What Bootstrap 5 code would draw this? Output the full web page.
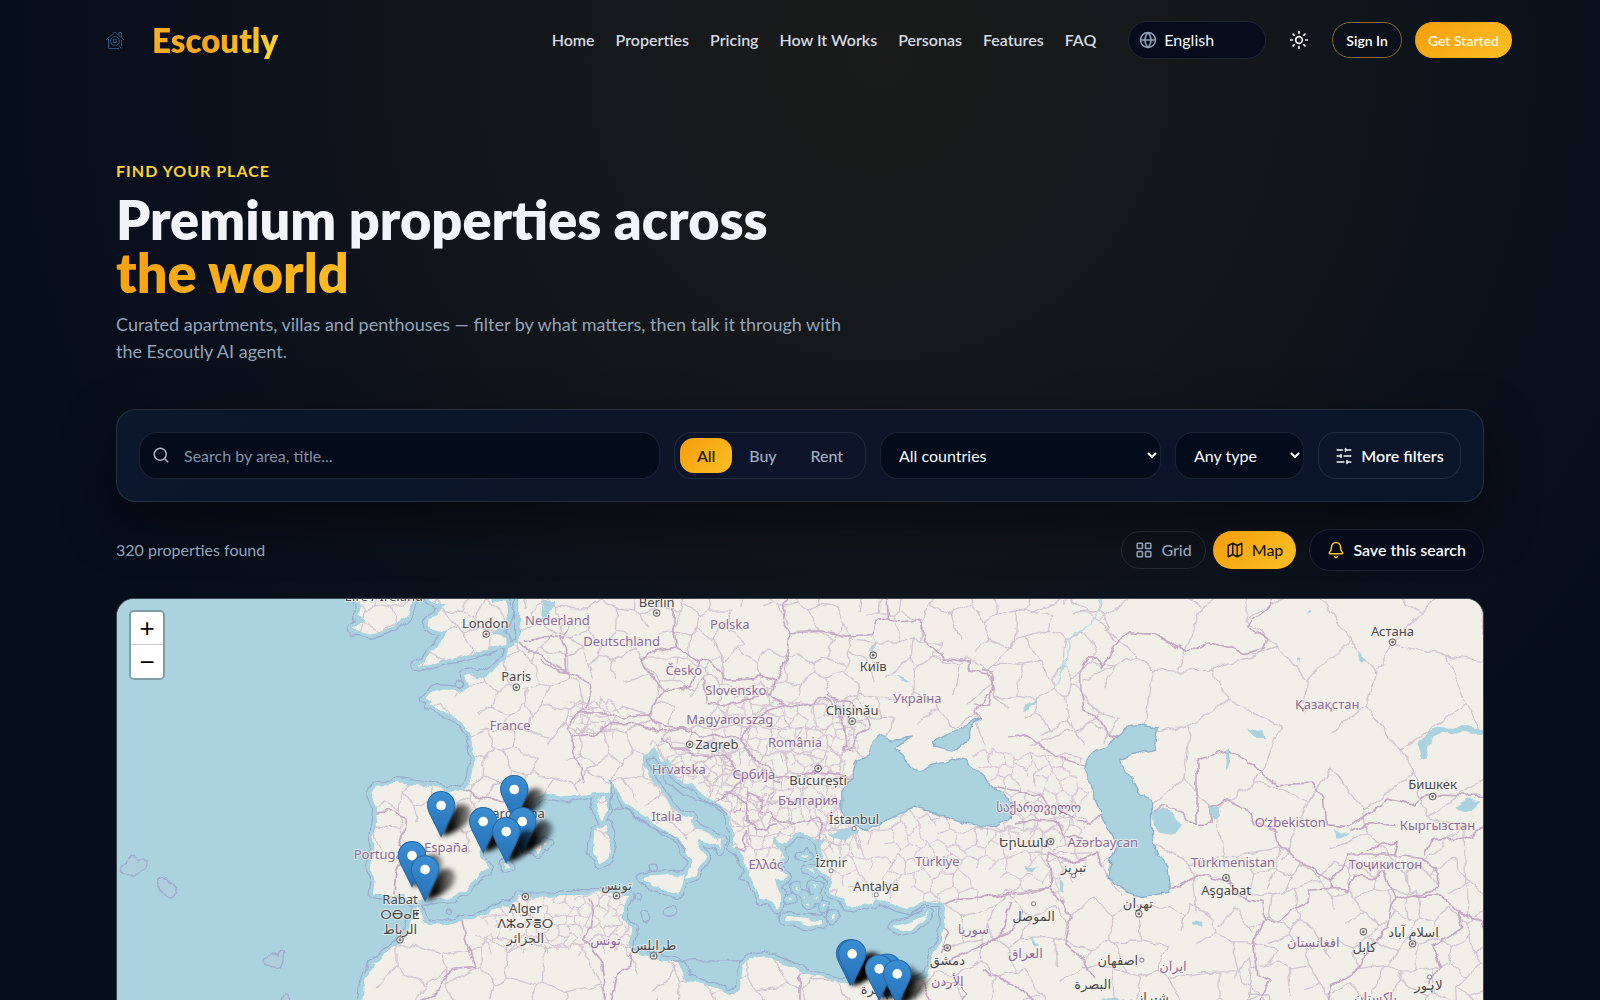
<!DOCTYPE html>
<html lang="en">
<head>
<meta charset="utf-8">
<meta name="viewport" content="width=device-width, initial-scale=1">
<title>Escoutly – Premium properties</title>
<link rel="stylesheet" href="https://cdn.jsdelivr.net/npm/bootstrap@5.3.0/dist/css/bootstrap.min.css">
<style>
:root{--gold:linear-gradient(135deg,#f59e0b,#fbbf24);--line:rgba(148,163,184,.16);--ink:#f1f5f9;--soft:#94a3b8;--field:#040b1b}
body{font-family:Lato,"Noto Sans",sans-serif;font-size:16px;color:var(--ink);background:radial-gradient(ellipse 58% 95% at 55% 6%,#1a1b1a 0%,#14181b 35%,#0b111b 72%,#060d1b 100%);color-scheme:dark}
button,select,input{font:inherit}
.shell-top{max-width:1424px;height:80px}
.shell{max-width:1368px}
.brand-name{font-size:33px;line-height:40px;font-weight:800;background:linear-gradient(135deg,#fbb324,#f5a31b 50%,#fde030);-webkit-background-clip:text;background-clip:text;color:transparent}
.brand-link{gap:13px}
.menu{gap:21px}
.menu a{color:#d5dae2;font-weight:600;text-decoration:none}
.lang{margin-left:32px}
.lang select{appearance:none;width:138px;height:38px;border-radius:19px;border:1px solid var(--line);background:#060c1b;color:#f8fafc;padding:0 12px 0 35px}
.lang svg{left:11px;top:10px}
.theme-btn{width:40px;height:36px;color:#f8fafc;margin:0 13px;border:0;line-height:20px}
.pill{height:36px;border-radius:18px;font-size:14px;font-weight:600;padding:0 13px}
.pill-line{background:#0b111a;border:1px solid #84692a;color:#fff;margin-right:13px}
.pill-gold{background:var(--gold);border:0;color:#fff7dc}
.hero{padding-top:79px}
.eyebrow{font-size:16px;line-height:24px;font-weight:700;letter-spacing:1px;color:#fbd12f}
.hero h1{font-size:54px;line-height:53px;font-weight:800;margin:10px 0 12px}
.gold-text{background:var(--gold);-webkit-background-clip:text;background-clip:text;color:transparent}
.intro{font-size:18px;line-height:27px;color:var(--soft);max-width:740px}
.filters{margin-top:44px;padding:22px;border-radius:20px;border:1px solid rgba(148,140,120,.22);background:linear-gradient(135deg,#0a172d,#0d1426 50%,#0a152a);box-shadow:0 20px 50px rgba(0,0,0,.5);gap:14px}
.ctl{height:47px;border-radius:18px;border:1px solid var(--line);background:var(--field);color:#f8fafc}
.search-box{flex:1 1 0;min-width:200px}
.search-box input{padding:0 16px 0 44px}
.search-box input::placeholder{color:#8791a1;opacity:1}
.search-box svg{left:13px;top:14px;color:#a8b2c0}
.deal{padding:5px;background:#0b1428;width:192px}
.deal button{border:0;background:none;border-radius:14px;color:#a3aec2;font-weight:500;flex:1 1 auto}
.deal button.on{background:var(--gold);color:#14130c}
select.ctl{padding:0 2px 0 14px}
.pick-country{width:281px}
.pick-type{width:129px}
.more{width:143px;background:#0b152a;font-weight:600}
.results{margin-top:27px;color:var(--soft);gap:7px}
.view{height:38px;border-radius:19px;border:1px solid var(--line);background:transparent;color:var(--soft);padding:0 13px;font-weight:500}
.view.on{background:var(--gold);border:0;color:#1a1608}
.save{height:42px;border-radius:21px;border:1px solid var(--line);background:#050b1a;color:#f8fafc;font-weight:600;padding:0 17px;margin-left:6px}
.map-frame{margin-top:27px;border-radius:18px 18px 0 0;border:1px solid #39454f;border-bottom:0;background:#aad3df;min-height:320px}
.zoomer{left:12px;top:11px;border:2px solid rgba(0,0,0,.25);border-radius:5px;background-clip:padding-box}
.zoomer button{width:32px;height:33px;border:0;background:#fff;color:#000;font:26px/30px "Liberation Sans",sans-serif;padding:0}
.zoomer button:first-child{border-bottom:1px solid #ccc}
.names text{font-family:"Noto Sans","DejaVu Sans",sans-serif;font-size:13px;text-anchor:middle;paint-order:stroke;stroke:#f8f4f0;stroke-opacity:.7;stroke-width:2px;fill:#4a4a4a}
.names .land-name text{fill:#8c6c98}
</style>
</head>
<body>
<div class="d-flex flex-column vh-100 overflow-hidden">
<header class="shell-top w-100 mx-auto d-flex align-items-center flex-shrink-0">
  <a href="#" class="brand-link d-flex align-items-center text-decoration-none me-auto">
    <svg width="51" height="36" viewBox="-18 -9 51 36" fill="none" stroke="#2f547d" stroke-width="1"><path d="M0 9 9 1l9 8M13 4.500V1.500h2.500v5M2.500 8v9.500H13M15.500 9v6"/><circle cx="9" cy="10" r="4.500"/><path d="M12 13.500l3.500 4M7.500 8.500h3v3h-3z"/></svg>
    <span class="brand-name">Escoutly</span>
  </a>
  <nav class="menu d-flex align-items-center"><a href="#">Home</a><a href="#">Properties</a><a href="#">Pricing</a><a href="#">How It Works</a><a href="#">Personas</a><a href="#">Features</a><a href="#">FAQ</a></nav>
  <div class="lang position-relative">
    <select aria-label="Language"><option>English</option></select>
    <svg class="position-absolute" width="18" height="18" viewBox="0 0 24 24" fill="none" stroke="#94a3b8" stroke-width="2"><circle cx="12" cy="12" r="10"/><path d="M12 2a14.500 14.500 0 0 0 0 20 14.500 14.500 0 0 0 0-20M2 12h20"/></svg>
  </div>
  <button class="theme-btn btn p-0 d-flex align-items-center justify-content-center" aria-label="Theme"><svg width="20" height="20" viewBox="0 0 24 24" fill="none" stroke="currentColor" stroke-width="2" stroke-linecap="round"><circle cx="12" cy="12" r="4"/><path d="M12 2v2M12 20v2M4.900 4.900l1.400 1.400M17.700 17.700l1.400 1.400M2 12h2M20 12h2M6.300 17.700l-1.400 1.400M19.100 4.900l-1.400 1.400"/></svg></button>
  <button class="pill pill-line">Sign In</button>
  <button class="pill pill-gold">Get Started</button>
</header>
<main class="shell w-100 mx-auto d-flex flex-column flex-grow-1">
  <section class="hero">
    <div class="eyebrow">FIND YOUR PLACE</div>
    <h1>Premium properties across<br><span class="gold-text">the world</span></h1>
    <p class="intro mb-0">Curated apartments, villas and penthouses — filter by what matters, then talk it through with the Escoutly AI agent.</p>
  </section>
  <form class="filters d-flex align-items-center" onsubmit="return false">
    <div class="search-box position-relative">
      <input class="ctl w-100" type="text" aria-label="Search" placeholder="Search by area, title...">
      <svg class="position-absolute" width="18" height="18" viewBox="0 0 24 24" fill="none" stroke="currentColor" stroke-width="2" stroke-linecap="round"><circle cx="11" cy="11" r="8"/><path d="m21 21-4.300-4.300"/></svg>
    </div>
    <div class="deal ctl d-flex"><button type="button" class="on">All</button><button type="button">Buy</button><button type="button">Rent</button></div>
    <select class="ctl pick-country" aria-label="Country"><option>All countries</option></select>
    <select class="ctl pick-type" aria-label="Type"><option>Any type</option></select>
    <button type="button" class="more ctl d-flex align-items-center justify-content-center gap-2 p-0 text-nowrap"><svg width="18" height="18" viewBox="0 0 24 24" fill="none" stroke="currentColor" stroke-width="2" stroke-linecap="round"><path d="M21 4h-7M10 4H3M21 12h-9M8 12H3M21 20h-5M12 20H3M14 2v4M8 10v4M16 18v4"/></svg>More filters</button>
  </form>
  <div class="results d-flex align-items-center">
    <span class="me-auto">320 properties found</span>
    <button class="view d-flex align-items-center gap-2"><svg width="18" height="18" viewBox="0 0 24 24" fill="none" stroke="currentColor" stroke-width="2"><rect x="3" y="3" width="7" height="7" rx="1"/><rect x="14" y="3" width="7" height="7" rx="1"/><rect x="14" y="14" width="7" height="7" rx="1"/><rect x="3" y="14" width="7" height="7" rx="1"/></svg>Grid</button>
    <button class="view on d-flex align-items-center gap-2"><svg width="18" height="18" viewBox="0 0 24 24" fill="none" stroke="currentColor" stroke-width="2" stroke-linejoin="round"><path d="M3 6l6-3 6 3 6-3v15l-6 3-6-3-6 3zM9 3v15M15 6v15"/></svg>Map</button>
    <button class="save d-flex align-items-center gap-2"><svg width="18" height="18" viewBox="0 0 24 24" fill="none" stroke="#fbc72a" stroke-width="2" stroke-linecap="round" stroke-linejoin="round"><path d="M10.300 21a2 2 0 0 0 3.400 0M3.300 15.300A1 1 0 0 0 4 17h16a1 1 0 0 0 .7-1.700C19.400 14 18 12.500 18 8A6 6 0 0 0 6 8c0 4.500-1.400 6-2.700 7.300"/></svg>Save this search</button>
  </div>
  <div class="map-frame position-relative overflow-hidden flex-grow-1">
    <svg class="position-absolute w-100 h-100" viewBox="117 598 1366 400" preserveAspectRatio="xMidYMin slice" role="img" aria-label="Map of properties">
      <defs>
        <filter id="rough" x="90" y="570" width="1420" height="460" filterUnits="userSpaceOnUse" color-interpolation-filters="sRGB"><feTurbulence type="fractalNoise" baseFrequency=".07" numOctaves="2" seed="4"/><feDisplacementMap in="SourceGraphic" scale="9" xChannelSelector="R" yChannelSelector="G"/></filter>
        <filter id="soft" x="-50%" y="-50%" width="200%" height="200%"><feGaussianBlur stdDeviation="2.500"/></filter>
        <linearGradient id="pinFill" x1="0" y1="0" x2="0" y2="1"><stop offset="0" stop-color="#3c8fd2"/><stop offset="1" stop-color="#2470b8"/></linearGradient>
        <linearGradient id="shadeFill" x1="0" y1="0" x2="1" y2="0"><stop offset=".3" stop-color="#000"/><stop offset="1" stop-color="#000" stop-opacity=".35"/></linearGradient>
        <g id="shore">
          <g transform="translate(110 590) scale(.33333)">
            <path d="M740 15 750 45 745 70 770 90 735 105 745 122 790 130 840 112 880 85 905 60 915 20 915-20 740-20z"/>
            <path d="M955-20 960 25 1010 40 975 75 955 105 985 120 1010 130 985 170 950 200 925 222 960 222 1000 205 1060 198 1120 180 1185 158 1185 135 1150 125 1190 95 1200 65 1185 35 1150 30 1130-20z"/>
            <path d="M1500-20 1330-20 1310 60 1290 120 1250 150 1198 168 1190 205 1150 240 1100 262 1080 245 1065 250 1080 285 1060 302 1000 295 960 308 945 320 970 330 960 345 1000 360 1040 380 1060 400 1080 430 1095 470 1105 500 1092 520 1085 560 1070 600 1000 592 930 582 850 575 800 590 785 605 805 650 800 700 795 760 785 830 800 870 795 905 850 910 880 905 910 930 935 932 960 922 1040 915 1065 900 1090 870 1130 830 1110 790 1125 750 1160 700 1200 672 1260 640 1290 612 1330 600 1380 615 1500 600z"/>
            <path d="M925 945 945 990 1000 1000 1060 985 1100 985 1150 955 1220 930 1300 918 1400 908 1500 905 1500 1280 755 1280 765 1180 790 1120 820 1090 880 1050 905 1000z"/>
            <path d="M1180 820l12-5 8 10-10 8zM1255 770l25-12 18 8-14 18zM1305 750l14 5-8 8z"/>
          </g>
          <g transform="translate(540 590) scale(.33333)">
            <path d="M-60 595 0 600 60 615 95 610 130 575 170 550 215 560 235 600 260 640 300 665 340 690 380 720 420 745 445 790 460 810 440 850 430 862 465 850 495 800 475 760 480 742 520 755 540 772 545 750 500 725 450 695 455 680 420 670 390 640 365 600 335 560 315 520 310 490 350 475 365 510 385 500 390 530 430 570 480 600 530 635 570 675 580 720 580 765 615 800 625 840 620 860 640 870 660 920 690 925 715 948 720 900 700 870 735 865 740 850 700 820 735 800 700 740 740 755 780 720 830 745 850 740 840 765 850 800 840 830 870 870 870 900 910 920 920 940 960 945 1000 935 1010 915 1060 940 1100 955 1150 930 1195 930 1215 940 1210 990 1205 1040 1180 1090 1160 1150 1140 1165 1090 1170 1000 1150 960 1165 900 1170 810 1150 780 1140 720 1110 680 1090 640 1095 610 1120 600 1190 570 1210 520 1185 440 1165 420 1120 400 1108 340 1098 280 1080 265 1050 280 1010 250 985 250 940 270 915 245 905 190 905 130 905 60 915-60 915-60 1280 2950 1280 2950-40-60-40z"/>
            <path d="M300 860 345 853 432 848 425 880 415 915 350 885zM165 712 205 700 215 740 205 800 175 812 160 780zM195 608 205 650 190 685 170 660 175 630zM735 975 840 985 840 1000 735 990zM1060 1002 1100 990 1165 965 1120 1010 1080 1017z"/>
            <path d="M760 890l8-4 5 8zM790 905l10 2-4 8zM820 880l14 4-8 8zM800 935l10-3v10zM845 940l12 4-8 8zM870 985l10-20 8 5zM780 790l14-6 12 8-16 4zM800 840l18-4 6 8zM745 925l6-6 6 10zM820 915l10 0-4 8z"/>
          </g>
        </g>
        <mask id="onLand" maskUnits="userSpaceOnUse" x="90" y="570" width="1420" height="460"><use href="#shore" fill="#fff"/></mask>
        <g id="pin"><path d="M0 0 8-20Q14-34 24-32 34-28 28-16 18-4 0 0z" fill="url(#shadeFill)" filter="url(#soft)"/><path d="M0-45c-7.600 0-13.700 6.200-13.700 13.700 0 3.300.9 5.500 2.500 8.800L0 0l11.200-22.500c1.600-3.300 2.500-5.500 2.500-8.800C13.700-38.800 7.600-45 0-45z" fill="url(#pinFill)" stroke="#2467a3" stroke-width="1"/><circle cy="-31" r="4.800" fill="#fff"/></g>
        <g id="cap"><circle r="3.200" fill="#f2efe9" stroke="#666" stroke-width="1"/><circle r="1.300" fill="#666"/></g>
        <circle id="town" r="2" fill="#fff" stroke="#888" stroke-width="1"/>
      </defs>
      <rect x="0" y="580" width="1600" height="900" fill="#aad3df"/>
      <g filter="url(#rough)">
        <use href="#shore" stroke="#99a9cd" stroke-width="32" stroke-linejoin="round"/>
        <use href="#shore" stroke="#aad3df" stroke-width="25" stroke-linejoin="round"/>
        <use href="#shore" fill="#f2efe9" stroke="#8fd2df" stroke-width="2"/>
        <g mask="url(#onLand)">
          <rect x="90" y="570" width="1420" height="460" fill="#f2efe9"/>
          <path id="mesh" fill="none" stroke="#d2c6d0" stroke-width="1.300"/>
          <path id="meshFine" fill="none" stroke="#d8c8d6" stroke-width="1.200"/>
          <g fill="none" stroke="#c4aac4" stroke-width="5" stroke-linejoin="round">
            <g transform="translate(110 590) scale(.33333)">
              <path d="M1070 595 1110 615 1160 625 1200 640M795 665 850 660 890 680 885 720 870 760 880 790 860 850 855 905M1055 985 1075 1060 1095 1130 1030 1135 995 1165 990 1200 930 1230M1235 155 1260 185 1300 190 1340 225 1380 245M1250 150 1310 135 1360 145 1380 90"/>
            </g>
            <g transform="translate(540 590) scale(.33333)">
              <path d="M60 140 75 180 80 245 155 280 145 350 110 370 80 410 100 440 105 500 125 540 130 575M0 205 60 240 85 245M400 20 400 100 410 165 350 175 305 205 340 260 370 300 410 300 450 280 480 210 410 165M110 365 200 365 250 380 330 370 340 340 380 290M480 205 520 220 560 260 600 260 660 255 705 275 690 310 730 345 660 370 600 440 640 500 700 540M490 260 500 330 560 345 620 325 690 310M430 410 480 440 540 430 610 440M330 370 350 400 430 410M100 440 160 430 210 400 290 400 360 420 440 410M365 440 400 470 440 470 470 490 560 495 570 510 600 570 570 600 550 620 530 635M740 20 730 90 750 130 740 200 710 270M750 125 850 120 920 135 1000 130 1010 95 1045 85 1040 20M1045 85 1080 95 1140 90 1150 150 1210 200 1290 210 1285 240 1355 250 1360 300 1300 360 1320 390M710 340 790 345 860 320 900 350 910 400 915 480 940 480M860 310 930 340 975 370 985 410 955 430 925 480M700 550 770 560 830 540 900 550 935 560M560 600 600 620 620 640 630 605 665 625 660 660 690 660 715 690 760 695 835 680 850 710 830 745M620 640 625 690 650 715 710 700M600 650 575 660M620 715 610 780 585 770M660 540 720 570M150 920 165 960 155 1010 130 1040 190 1110 200 1230M280 1085 270 1120 235 1145 215 1230M780 1145 780 1280M1205 1000 1225 1020 1200 1090M1150 1170 1170 1230M1210 1110 1280 1080 1420 1010 1450 950M1200 945 1250 920 1350 915 1480 900 1530 890M1205 1170 1250 1165 1280 1200 1240 1240"/>
            </g>
            <g transform="translate(980 590) scale(.33333)">
              <path d="M0 235 40 240 35 300 30 345-20 345M300 300 310 350 360 390 385 430 420 440M300 300 300 240 320 200 345 200 360 230 400 165 450 125 520 130 560 150 620 185 680 155 730 165 790 190 850 175 860 140 820 120 800 100 840 70 870 40 860 10M310 520 250 505 180 460 140 430 80 440M45 585 120 600 180 605 200 640 250 660 290 690 330 700 370 660M100 700 160 690 230 690 250 730 310 740M200 780 260 810 310 800 350 780 360 830M200 780 210 890 240 930 270 970 250 1060 310 1100 340 1160M0 920 100 900 200 890M0 1070 60 1030 90 930M0 1130 100 1180 180 1240M520 665 550 640 600 660 625 695 690 695 690 650 740 625 790 650 820 700M648 695V505L745 475 830 530 880 580 990 575 1030 620 1035 700 1100 705 1150 680 1220 620 1300 640 1340 610 1510 615M880 700 890 750 940 800 1050 860 1050 890M820 690 890 720M565 890 600 885 640 850 690 855 740 870 800 920 845 930 850 980 890 990 940 950 980 930 985 895 1050 890 1100 895 1120 850 1180 860 1210 840 1240 920 1370 890 1360 830 1320 800 1240 790 1100 790 1085 830 1050 860M1110 720 1160 700 1240 700M1240 790 1250 750 1190 760 1150 780M1330 790 1350 750 1450 740 1510 710M845 980 820 1050 830 1150 870 1165 830 1240M1240 920 1220 1000 1170 1060 1120 1140 1050 1180 1040 1240M1300 910 1380 910 1430 960 1500 990 1510 1030M1430 960 1440 1010 1350 1060 1380 1120 1340 1180"/>
            </g>
          </g>
        </g>
        <g fill="#aad3df" stroke="#8fb0cc" stroke-width="4" stroke-linejoin="round">
          <g transform="translate(540 590) scale(.33333)">
            <path d="M1020 430 1060 447 1110 440 1065 470 1090 490 1120 530 1140 542 1170 520 1210 510 1235 500 1280 510 1320 545 1370 595 1415 632 1412 680 1370 705 1300 702 1240 685 1180 660 1120 650 1070 670 1020 700 980 710 930 690 905 660 905 600 935 560 950 510 985 490 1000 450z"/>
            <path d="M1180 450 1230 425 1320 385 1290 412 1275 450 1235 482 1180 470z"/>
            <path d="M860 735 900 712 960 715 950 735 900 742z" stroke="none"/>
          </g>
          <g transform="translate(980 590) scale(.33333)">
            <path d="M310 525 330 490 380 460 420 430 440 403 480 400 530 410 520 470 480 480 465 490 415 500 425 530 450 560 470 600 515 630 515 660 515 730 530 790 560 820 570 905 490 917 440 900 385 860 390 810 410 760 380 700 340 620 330 570z"/>
            <path stroke="none" d="M515 665 560 650 580 670 600 700 580 728 530 720zM1320 500 1308 460 1340 420 1380 405 1510 410 1510 430 1400 422 1350 440 1335 500zM690 650l20-5 8 30-15 15-12-10zM735 480l15-15-8 60-10 10zM800 415l40 5 12 20-30 0zM1415 645l50-20 25 5-20 25-45 0zM120 360l45-45 0 10-35 38zM130 820l45 5-20 20zM235 850l15 20 5 35-15-10zM635 990h35v12h-30zM1130 190l12 0 15 20-22 0zM1060 715l50 15-40 2zM365 1220l40-10 20 20h-60zM975 65l8-12 5 3-12 14zM950 200h8l-4 20zM145 1025l30 35-10 5z"/>
            <path stroke="#b4dce4" fill="none" d="M360 20 330 100 265 140 265 190 235 250 220 290"/>
          </g>
          <g transform="translate(540 590) scale(.33333)"><path stroke="none" d="M1055 250l50 20-5 10zM1000 130l6 60-8-2zM10 30h35l-20 55-20 0z"/></g>
        </g>
        <g transform="translate(110 590) scale(.33333)" fill="#b0cfdd" stroke="#9daacc" stroke-width="4">
          <path d="M32 830q5-18 25-20 15-30 30-2 15-10 28 5 5 20-15 22-20 20-50 17-20-5-18-22zM145 865q5-20 30-5 30 20 28 45-5 20-25 12-25-20-33-52zM470 1105q5-25 35-12 8-25 20-8 0 20-10 40-25 8-45-20zM515 1240q-5-30 15-28 20 10 8 28z"/>
          <g fill="none"><circle cx="1018" cy="957" r="9"/><circle cx="1050" cy="275" r="13"/></g>
        </g>
        <g transform="translate(540 590) scale(.33333)" fill="none" stroke="#9daacc" stroke-width="4"><circle cx="390" cy="957" r="17"/><circle cx="320" cy="970" r="14"/><circle cx="298" cy="915" r="11"/><circle cx="342" cy="828" r="11"/><path d="M215 560 210 650 260 655 320 700 400 735 440 780M365 520 380 570 430 610 520 640 560 670M395 1107H610"/></g>
      </g>
      <g class="names">
        <g class="land-name">
          <text x="511" y="729">France</text><text x="447" y="850">España</text><text x="381" y="857">Portugal</text><text x="558" y="624">Nederland</text><text x="730" y="628">Polska</text><text x="622" y="645">Deutschland</text><text x="684" y="674">Česko</text><text x="736" y="694">Slovensko</text><text x="730" y="723">Magyarország</text><text x="795" y="746">România</text><text x="679" y="773">Hrvatska</text><text x="754" y="778">Србија</text><text x="808" y="803">България</text><text x="667" y="819">Italia</text><text x="766" y="867">Ελλάς</text><text x="937" y="864">Türkiye</text><text x="606" y="943">تونس</text><text x="917" y="702">Україна</text><text x="973" y="932">سوريا</text><text x="947" y="984">الأردن</text><text x="1326" y="708">Қазақстан</text><text x="1436" y="828">Кыргызстан</text><text x="1289" y="825">Oʻzbekiston</text><text x="1038" y="810">საქართველო</text><text x="1102" y="845">Azərbaycan</text><text x="1232" y="865">Türkmenistan</text><text x="1384" y="867">Тоҷикистон</text><text x="1025" y="956">العراق</text><text x="1172" y="969">ایران</text><text x="1312" y="945">افغانستان</text><text x="1374" y="1000">پاکستان</text>
        </g>
        <text x="385" y="600">Éire / Ireland</text><text x="486" y="627">London</text><text x="517" y="680">Paris</text><text x="515" y="816">Barcelona</text><text x="401" y="902">Rabat</text><text x="401" y="917">ⵔⴱⴰⵟ</text><text x="401" y="932">الرباط</text><text x="526" y="911">Alger</text><text x="526" y="926">ⴷⵣⴰⵢⴻⵔ</text><text x="526" y="941">الجزائر</text><text x="657" y="606">Berlin</text><text x="717" y="748">Zagreb</text><text x="818" y="784">București</text><text x="854" y="822">İstanbul</text><text x="831" y="865">İzmir</text><text x="876" y="889">Antalya</text><text x="617" y="888">تونس</text><text x="654" y="948">طرابلس</text><text x="873" y="670">Київ</text><text x="852" y="714">Chișinău</text><text x="947" y="963">دمشق</text><text x="880" y="992">القاهرة</text><text x="1391" y="635">Астана</text><text x="1431" y="788">Бишкек</text><text x="1023" y="845">Երևան</text><text x="1073" y="870">تبریز</text><text x="1225" y="893">Aşgabat</text><text x="1137" y="906">تهران</text><text x="1033" y="919">الموصل</text><text x="1117" y="963">اصفهان</text><text x="1092" y="987">البصرة</text><text x="1152" y="1000">شیراز</text><text x="1363" y="950">کابل</text><text x="1412" y="935">اسلام آباد</text><text x="1427" y="988">لاہور</text>
      </g>
      <g>
        <use href="#cap" x="487" y="633"/><use href="#cap" x="517" y="686"/><use href="#cap" x="401" y="938"/><use href="#cap" x="526" y="895"/><use href="#cap" x="657" y="612"/><use href="#cap" x="690" y="743"/><use href="#cap" x="818" y="767"/><use href="#cap" x="617" y="894"/><use href="#cap" x="654" y="954"/><use href="#cap" x="873" y="654"/><use href="#cap" x="852" y="720"/><use href="#cap" x="947" y="946"/><use href="#cap" x="1391" y="641"/><use href="#cap" x="1431" y="795"/><use href="#cap" x="1050" y="840"/><use href="#cap" x="1225" y="876"/><use href="#cap" x="1138" y="912"/><use href="#cap" x="1362" y="930"/><use href="#cap" x="1411" y="942"/>
        <use href="#town" x="854" y="827"/><use href="#town" x="831" y="869"/><use href="#town" x="876" y="893"/><use href="#town" x="1073" y="874"/><use href="#town" x="1033" y="902"/><use href="#town" x="1141" y="958"/><use href="#town" x="1428" y="975"/>
      </g>
      <g>
        <use href="#pin" x="515" y="819"/><use href="#pin" x="442" y="835"/><use href="#pin" x="484" y="851"/><use href="#pin" x="523" y="851"/><use href="#pin" x="507" y="861"/><use href="#pin" x="413" y="885"/><use href="#pin" x="426" y="899"/><use href="#pin" x="850" y="983"/><use href="#pin" x="852" y="983"/><use href="#pin" x="887" y="997"/><use href="#pin" x="879" y="998"/><use href="#pin" x="897" y="1003"/>
      </g>
    </svg>
    <div class="zoomer position-absolute d-flex flex-column overflow-hidden"><button aria-label="Zoom in">+</button><button aria-label="Zoom out">−</button></div>
  </div>
</main>
</div>
<script src="https://cdn.jsdelivr.net/npm/bootstrap@5.3.0/dist/js/bootstrap.bundle.min.js"></script>
<script>
// Province borders: a jittered honeycomb whose shared corners coincide
function rnd(i,j,k){var v=Math.sin(i*127.1+j*311.7+k*74.7)*43758.5453;return v-Math.floor(v)}
function comb(x0,y0,x1,y1,s){
  var d='',w=s*.87,rows=Math.ceil((y1-y0)/(s*.75)),cols=Math.ceil((x1-x0)/w);
  function pt(c,r){return (x0+c*w/2+(rnd(c,r,s)-.5)*s*.5).toFixed(0)+' '+(y0+r*s*.25+(rnd(r,c,s+1)-.5)*s*.45).toFixed(0)}
  for(var j=0;j<rows;j++)for(var i=0;i<cols;i++){
    var c=i*2+(j%2),r=j*3;
    if(rnd(i,j,9)<.12)continue;
    d+='M'+pt(c-1,r+1)+'L'+pt(c,r)+'L'+pt(c+1,r+1)+'L'+pt(c+1,r+3);
  }
  return d;
}
document.getElementById('mesh').setAttribute('d',comb(340,580,860,830,32)+comb(860,580,1080,740,36)+comb(1080,590,1500,850,84)+comb(380,940,900,1010,44)+comb(940,900,1240,1010,42)+comb(1240,860,1500,1010,34));
document.getElementById('meshFine').setAttribute('d',comb(480,893,640,950,13)+comb(720,700,850,850,16)+comb(820,810,1080,900,20)+comb(572,700,612,730,9)+comb(980,750,1080,830,17)+comb(655,740,740,800,14));
</script>
</body>
</html>
